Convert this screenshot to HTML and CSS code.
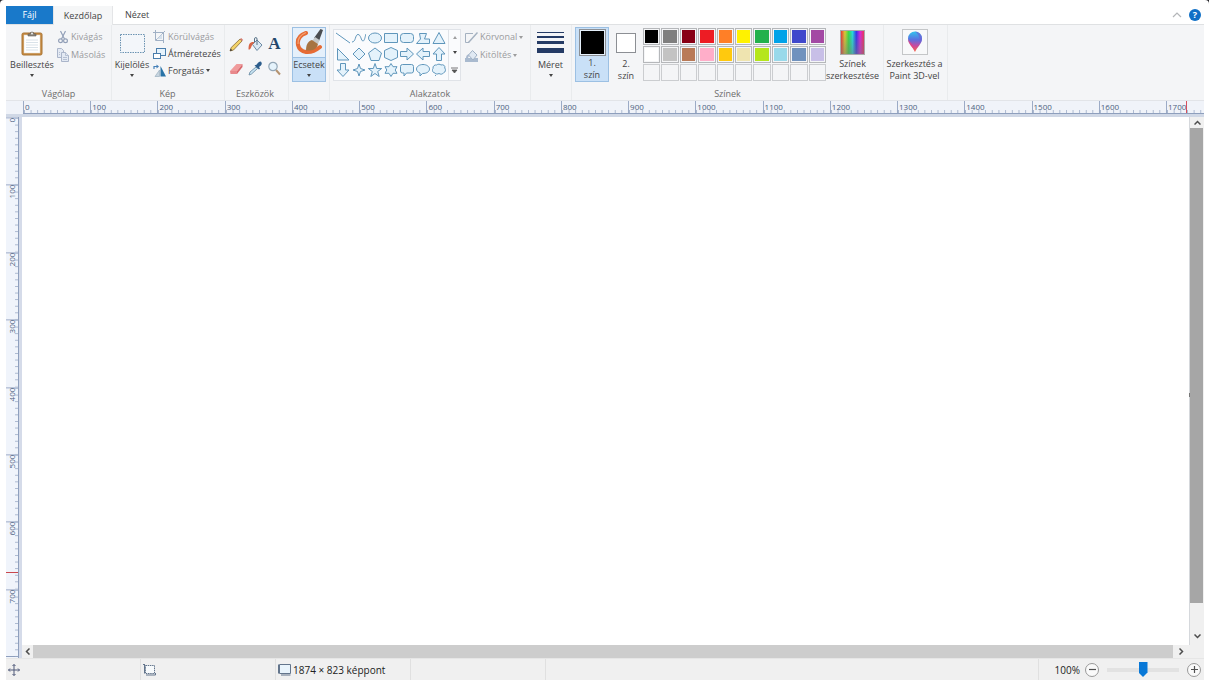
FILE: index.html
```html
<!DOCTYPE html>
<html lang="hu">
<head>
<meta charset="utf-8">
<title>Paint</title>
<link rel="stylesheet" href="styles.css">
</head>
<body>
<div class="window">
  <nav class="tabs">
    <button type="button" class="tab tab-file">Fájl</button>
    <button type="button" class="tab tab-active">Kezdőlap</button>
    <button type="button" class="tab">Nézet</button>
    <span class="spacer"></span>
    <button type="button" class="plain" aria-label="Menüszalag összecsukása"><svg width="10" height="6" viewBox="0 0 10 6" fill="none" stroke="#b4b6b9" stroke-width="1.2"><path d="M1 5L5 1L9 5"/></svg></button>
    <button type="button" class="help" aria-label="Súgó">?</button>
  </nav>

  <main class="ribbon">
    <section class="group g-clipboard">
      <div class="group-body">
        <button type="button" class="big"><span class="pic"><svg width="22" height="26" viewBox="0 0 22 26"><rect x="1" y="3" width="20" height="22" rx="1.5" fill="#c88b42" stroke="#a87435"/><path d="M3 5h16v18H3z" fill="#fff" stroke="#d8d4c8" stroke-width=".5"/><path d="M5 10h12M5 12.500h12M5 15h12M5 17.500h12M5 20h12" stroke="#cfdae3" stroke-width=".8"/><path d="M7 6V4h2a2 2 0 0 1 4 0h2v2z" fill="#8b877e" stroke="#625d54" stroke-width=".6"/><circle cx="11" cy="3.500" r="1" fill="#eee"/></svg></span><span class="txt">Beillesztés</span><i class="arrow"></i></button>
        <div class="stack">
          <button type="button" class="small" disabled><svg width="12" height="14" viewBox="0 0 12 14" fill="none" stroke="#93a0b8" stroke-width="1.2"><path d="M3.500 1l4 8M8.500 1l-4 8"/><circle cx="3.500" cy="10.800" r="1.900"/><circle cx="8.500" cy="10.800" r="1.900"/></svg>Kivágás</button>
          <button type="button" class="small" disabled><svg width="12" height="14" viewBox="0 0 12 14" fill="#e3e9f3" stroke="#aab5ca"><path d="M.5.500h4l2 2v7h-6z"/><path d="M4.500 4.500h4l3 3v6h-7z"/><path d="M8.500 4.500v3h3M6 9.500h4M6 11.500h4M2 4.500h1M2 6.500h1" stroke-width=".8"/></svg>Másolás</button>
        </div>
      </div>
      <h2>Vágólap</h2>
    </section>

    <section class="group g-image">
      <div class="group-body">
        <button type="button" class="big"><span class="pic"><svg width="25" height="19" viewBox="0 0 25 19"><rect x=".5" y=".5" width="24" height="18" fill="#f3f6fa" stroke="#6b93b2" stroke-dasharray="1.500 1"/></svg></span><span class="txt">Kijelölés</span><i class="arrow"></i></button>
        <div class="stack">
          <button type="button" class="small" disabled><svg width="13" height="13" viewBox="0 0 13 13" fill="none" stroke="#a0b0c5"><path d="M2.500 0v10.500H11M0 2.500h10.500V13"/><path d="M3 10l9-9"/><path d="M4 9l5-5v5z" fill="#d5e0ec" stroke="none"/></svg>Körülvágás</button>
          <button type="button" class="small"><svg width="13" height="13" viewBox="0 0 13 13" stroke="#4b7eac"><rect x="3.500" y="1.500" width="9" height="7" fill="#e7f3fc"/><rect x=".5" y="6.500" width="7" height="5" fill="#fff"/></svg>Átméretezés</button>
          <button type="button" class="small"><svg width="13" height="13" viewBox="0 0 13 13"><path d="M7.500 2v10.500H13z" fill="#2873a7"/><path d="M6.500 6v6.500H2z" fill="#c6d4df" stroke="#91a7b9" stroke-width=".6"/><path d="M1 5V2.500h3" fill="none" stroke="#4580b8" stroke-width="1.200"/><path d="M3.500.500L6 2.500 3.500 4.500z" fill="#4580b8"/></svg>Forgatás<i class="arrow"></i></button>
        </div>
      </div>
      <h2>Kép</h2>
    </section>

    <section class="group g-tools">
      <div class="group-body">
        <div class="tools">
          <button type="button" aria-label="Ceruza"><svg width="15" height="15" viewBox="0 0 15 15"><path d="M1 14l1.200-3.500L11 2l2 2L4.500 13z" fill="#f2d268" stroke="#876b39" stroke-width=".8"/><path d="M11 2l1.200-1 2 2L13 4z" fill="#d77c72"/><path d="M1 14l.7-2.300 1.700 1.600z" fill="#333"/></svg></button>
          <button type="button" aria-label="Kitöltés színnel"><svg width="15" height="15" viewBox="0 0 15 15"><path d="M4.500 7.500L9 3l5 5-5 5.500z" fill="#dce9f4" stroke="#6c8aa5"/><path d="M9 8V2q0-1.500-1.200-1.500T6.500 2v3" fill="none" stroke="#557187"/><path d="M6.500 5C2 4.500.5 6.500.5 12.500c2.500.5 2.500-3 4-5z" fill="#d76547"/></svg></button>
          <button type="button" class="letter" aria-label="Szöveg">A</button>
          <button type="button" aria-label="Radír"><svg width="15" height="15" viewBox="0 0 15 15"><path d="M1 10l6.500-7h6L8 10z" fill="#f09b9c"/><path d="M1 10h7v3H1.500z" fill="#e8888b"/><path d="M8 10l5.500-7v3L8 13z" fill="#d8696d"/></svg></button>
          <button type="button" aria-label="Színválasztó"><svg width="15" height="15" viewBox="0 0 15 15"><path d="M1 14l1-3 6-5 1.500 1.500-6 5.500z" fill="#c8e4f3" stroke="#6387a0" stroke-width=".8"/><path d="M6.500 4.500l4.500 4 1-1-1-1.500c3-2 3-3 2.500-4.500S11 0 8.800 3.500z" fill="#2d5d8c"/></svg></button>
          <button type="button" aria-label="Nagyító"><svg width="15" height="15" viewBox="0 0 15 15"><path d="M9 9l4 4.500" stroke="#b59370" stroke-width="2"/><circle cx="6" cy="5.500" r="4.200" fill="#e5f3fc" stroke="#94a7b7" stroke-width="1.200"/></svg></button>
        </div>
      </div>
      <h2>Eszközök</h2>
    </section>

    <section class="group g-brush">
      <div class="group-body">
        <button type="button" class="big brushes"><span class="pic"><svg width="28" height="27" viewBox="0 0 28 27"><path d="M11 4C5 6 2 10 3 16c2 8 12 10 22 2" fill="none" stroke="#e66b35" stroke-width="4" stroke-linecap="round"/><path d="M11 3.500C5 6 2.500 10 3 15" fill="none" stroke="#f3a274" stroke-width="1.200"/><path d="M19 9l6.500-9L28 1l-4 11z" fill="#4b4d50"/><path d="M17.500 11.500L20 8l4.500 3-1.500 4z" fill="#c4c7c8"/><path d="M11 21.500c0-6 2-9.500 6-10.500l6 4c-1 5-5 7-12 6.500z" fill="#a77442"/></svg></span><span class="txt">Ecsetek</span><i class="arrow"></i></button>
      </div>
    </section>

    <section class="group g-shapes">
      <div class="group-body">
        <div class="gallery">
          <div class="shapes">
            <button type="button" aria-label="Vonal"><svg viewBox="0 0 14 14"><path d="M0 2l14 10"/></svg></button>
            <button type="button" aria-label="Görbe"><svg viewBox="0 0 14 14"><path class="open" d="M0 11C4 11 3 3.500 6 3.500S9 10 11 10c1.500 0 2-4 3-7"/></svg></button>
            <button type="button" aria-label="Ellipszis"><svg viewBox="0 0 14 14"><ellipse cx="7" cy="7" rx="6.500" ry="5"/></svg></button>
            <button type="button" aria-label="Téglalap"><svg viewBox="0 0 14 14"><path d="M.5 2.500h13v9H.5z"/></svg></button>
            <button type="button" aria-label="Lekerekített téglalap"><svg viewBox="0 0 14 14"><rect x=".5" y="2.500" width="13" height="9" rx="3"/></svg></button>
            <button type="button" aria-label="Sokszög"><svg viewBox="0 0 14 14"><path d="M3.500 2.500h7L8.500 8h5v4.500H.5l4-4.500z"/></svg></button>
            <button type="button" aria-label="Háromszög"><svg viewBox="0 0 14 14"><path d="M7 1.500l6 11H1z"/></svg></button>
            <button type="button" aria-label="Derékszögű háromszög"><svg viewBox="0 0 14 14"><path d="M1.500 1.500v11.500H13z"/></svg></button>
            <button type="button" aria-label="Rombusz"><svg viewBox="0 0 14 14"><path d="M7 1l6 6-6 6-6-6z"/></svg></button>
            <button type="button" aria-label="Ötszög"><svg viewBox="0 0 14 14"><path d="M7 1l6.500 5-2.500 7.500H3L.5 6z"/></svg></button>
            <button type="button" aria-label="Hatszög"><svg viewBox="0 0 14 14"><path d="M7 .500l6.500 3v7l-6.500 3-6.500-3v-7z"/></svg></button>
            <button type="button" aria-label="Nyíl jobbra"><svg viewBox="0 0 14 14"><path d="M.5 4.500h6.500v-3.500L13.500 7 7 13V9.500H.5z"/></svg></button>
            <button type="button" aria-label="Nyíl balra"><svg viewBox="0 0 14 14"><path d="M13.500 4.500H7V1L.5 7 7 13V9.500h6.500z"/></svg></button>
            <button type="button" aria-label="Nyíl felfelé"><svg viewBox="0 0 14 14"><path d="M4.500 13.500V7H1L7 .500 13 7H9.500v6.500z"/></svg></button>
            <button type="button" aria-label="Nyíl lefelé"><svg viewBox="0 0 14 14"><path d="M4.500.500V7H1l6 6.500L13 7H9.500V.500z"/></svg></button>
            <button type="button" aria-label="Négyágú csillag"><svg viewBox="0 0 14 14"><path d="M7 1l1.500 4.500L13 7 8.500 8.500 7 13 5.500 8.500 1 7l4.500-1.500z"/></svg></button>
            <button type="button" aria-label="Ötágú csillag"><svg viewBox="0 0 14 14"><path d="M7 .500l1.700 5h5L9.700 8.500l1.500 5L7 10.500l-4.200 3 1.500-5L.3 5.500h5z"/></svg></button>
            <button type="button" aria-label="Hatágú csillag"><svg viewBox="0 0 14 14"><path d="M7 .500l2 3.200h4L11.200 7 13 10.300H9l-2 3.200-2-3.200H1L2.800 7 1 3.700h4z"/></svg></button>
            <button type="button" aria-label="Lekerekített buborék"><svg viewBox="0 0 14 14"><path d="M2.500 1.500h9q2 0 2 2V8q0 2-2 2H6.500L4 13v-3H2.500q-2 0-2-2V3.500q0-2 2-2z"/></svg></button>
            <button type="button" aria-label="Ovális buborék"><svg viewBox="0 0 14 14"><path d="M4 10C2 9.300.5 8 .5 6c0-2.500 3-4.500 6.500-4.500s6.500 2 6.500 4.500S11 10.500 6.500 10.500L4 13z"/></svg></button>
            <button type="button" aria-label="Felhőbuborék"><svg viewBox="0 0 14 14"><path d="M3 10C0 9.500 0 6.500 1 5.500.500 3 3 1.500 4.500 2 6 .800 8 1 9 2c2-.8 4.500.5 3.800 3 1.200 1.500.7 4.500-1.300 4.800-1 1.700-3 1.700-4.500.7-1.500.8-3 .8-4-.5zM3 12l1 .8"/></svg></button>
          </div>
          <div class="gallery-nav">
            <button type="button" class="faded" aria-label="Fel"><i class="arrow up"></i></button>
            <button type="button" aria-label="Le"><i class="arrow"></i></button>
            <button type="button" aria-label="Továbbiak"><svg width="7" height="7" viewBox="0 0 7 7"><path d="M0 1h7M1 3h5L3.500 6z" fill="#555" stroke="#555" stroke-width=".8"/></svg></button>
          </div>
        </div>
        <div class="stack">
          <button type="button" class="small" disabled><svg width="13" height="13" viewBox="0 0 13 13" fill="none" stroke="#a4b1c0"><path d="M8 2.500H.5v9H4M12 2.500l-1 0"/><path d="M3.500 11.500L12.500 1.500" stroke-width="1.500"/></svg>Körvonal<i class="arrow"></i></button>
          <button type="button" class="small" disabled><svg width="13" height="13" viewBox="0 0 13 13"><path d="M0 9h13v4H0z" fill="#a9bacf"/><path d="M3.500 6l4-4.500L12 6l-4 5z" fill="#e0e9f3" stroke="#9fb0c4"/><path d="M4 5C1 6 1 8 1 11c2 0 2-3 3-4z" fill="#a9b9ce"/></svg>Kitöltés<i class="arrow"></i></button>
        </div>
      </div>
      <h2>Alakzatok</h2>
    </section>

    <section class="group g-size">
      <div class="group-body">
        <button type="button" class="big"><span class="pic"><svg width="27" height="24" viewBox="0 0 27 24" fill="#253b65"><path d="M0 1h27v1H0zM0 5h27v2H0zM0 10h27v3H0zM0 17h27v5H0z"/></svg></span><span class="txt">Méret</span><i class="arrow"></i></button>
      </div>
    </section>

    <section class="group g-colors">
      <div class="group-body">
        <button type="button" class="big color selected"><span class="pic"><span class="swatch black"></span></span><span class="txt">1.<br>szín</span></button>
        <button type="button" class="big color"><span class="pic"><span class="swatch white"></span></span><span class="txt">2.<br>szín</span></button>
        <div class="palette">
          <button type="button" aria-label="Fekete" style="background-color:#000"></button><button type="button" aria-label="Szürke" style="background-color:#7f7f7f"></button><button type="button" aria-label="Sötétvörös" style="background-color:#880015"></button><button type="button" aria-label="Vörös" style="background-color:#ed1c24"></button><button type="button" aria-label="Narancs" style="background-color:#ff7f27"></button><button type="button" aria-label="Sárga" style="background-color:#fff200"></button><button type="button" aria-label="Zöld" style="background-color:#22b14c"></button><button type="button" aria-label="Türkiz" style="background-color:#00a2e8"></button><button type="button" aria-label="Indigó" style="background-color:#3f48cc"></button><button type="button" aria-label="Lila" style="background-color:#a349a4"></button>
          <button type="button" aria-label="Fehér" style="background-color:#fff"></button><button type="button" aria-label="Világosszürke" style="background-color:#c3c3c3"></button><button type="button" aria-label="Barna" style="background-color:#b97a57"></button><button type="button" aria-label="Rózsaszín" style="background-color:#ffaec9"></button><button type="button" aria-label="Arany" style="background-color:#ffc90e"></button><button type="button" aria-label="Halványsárga" style="background-color:#efe4b0"></button><button type="button" aria-label="Lime" style="background-color:#b5e61d"></button><button type="button" aria-label="Világostürkiz" style="background-color:#99d9ea"></button><button type="button" aria-label="Kékesszürke" style="background-color:#7092be"></button><button type="button" aria-label="Levendula" style="background-color:#c8bfe7"></button>
          <button type="button" class="empty" aria-label="Egyéni 1"></button><button type="button" class="empty" aria-label="Egyéni 2"></button><button type="button" class="empty" aria-label="Egyéni 3"></button><button type="button" class="empty" aria-label="Egyéni 4"></button><button type="button" class="empty" aria-label="Egyéni 5"></button><button type="button" class="empty" aria-label="Egyéni 6"></button><button type="button" class="empty" aria-label="Egyéni 7"></button><button type="button" class="empty" aria-label="Egyéni 8"></button><button type="button" class="empty" aria-label="Egyéni 9"></button><button type="button" class="empty" aria-label="Egyéni 10"></button>
        </div>
        <button type="button" class="big edit-colors"><span class="pic"><span class="spectrum"></span></span><span class="txt">Színek<br>szerkesztése</span></button>
      </div>
      <h2>Színek</h2>
    </section>

    <section class="group g-3d">
      <div class="group-body">
        <button type="button" class="big"><span class="pic"><svg width="26" height="26" viewBox="0 0 26 26"><defs><linearGradient id="drop" x1="0" y1="0" x2="0" y2="1"><stop offset="0" stop-color="#30c5ee"/><stop offset=".4" stop-color="#5b6fe0"/><stop offset=".7" stop-color="#c64aa0"/><stop offset="1" stop-color="#fb6c35"/></linearGradient></defs><rect x=".5" y=".5" width="25" height="25" fill="#f8f9fa" stroke="#c4c6c8"/><path d="M13 23C11 18 6 15 6 9.500a7 7 0 0 1 14 0C20 15 15 18 13 23z" fill="url(#drop)"/><path d="M13 23C11 18 6 15 6 10c2 4 6 5 7 13z" fill="#e9427d" opacity=".7"/><path d="M13 2.500a7 7 0 0 1 7 7c0 2-1 4-2 5 0-5-1-9-5-12z" fill="#6e62d5" opacity=".7"/></svg></span><span class="txt">Szerkesztés a<br>Paint 3D-vel</span></button>
      </div>
    </section>
  </main>

  <div class="ruler-row">
    <div class="hruler">
      <span>0</span><span>100</span><span>200</span><span>300</span><span>400</span><span>500</span><span>600</span><span>700</span><span>800</span><span>900</span><span>1000</span><span>1100</span><span>1200</span><span>1300</span><span>1400</span><span>1500</span><span>1600</span><span class="partial">1700</span>
      <i class="cursor-x"></i>
    </div>
  </div>

  <div class="work">
    <div class="vruler">
      <span>0</span><span>100</span><span>200</span><span>300</span><span>400</span><span>500</span><span>600</span><span>700</span>
      <i class="end-line"></i>
      <i class="cursor-y"></i>
    </div>
    <div class="sheet-area">
      <div class="sheet-row">
        <div class="sheet"><i class="handle"></i></div>
        <div class="vscroll">
          <button type="button" class="plain" aria-label="Görgetés fel"><svg width="7" height="5" viewBox="0 0 7 5" fill="none" stroke="#4d4d4d" stroke-width="1.500"><path d="M.5 4.500l3-3 3 3"/></svg></button>
          <div class="track"><div class="thumb"></div></div>
          <button type="button" class="plain" aria-label="Görgetés le"><svg width="7" height="5" viewBox="0 0 7 5" fill="none" stroke="#4d4d4d" stroke-width="1.500"><path d="M.5.500l3 3 3-3"/></svg></button>
        </div>
      </div>
      <div class="hscroll">
        <button type="button" class="plain" aria-label="Görgetés balra"><svg width="5" height="7" viewBox="0 0 5 7" fill="none" stroke="#4d4d4d" stroke-width="1.500"><path d="M4.500.500l-3 3 3 3"/></svg></button>
        <div class="thumb"></div>
        <button type="button" class="plain" aria-label="Görgetés jobbra"><svg width="5" height="7" viewBox="0 0 5 7" fill="none" stroke="#4d4d4d" stroke-width="1.500"><path d="M.5.500l3 3-3 3"/></svg></button>
      </div>
    </div>
  </div>

  <footer class="status">
    <div class="cell"><svg width="12" height="12" viewBox="0 0 12 12" fill="none" stroke="#4f5878"><path d="M6 .500v11M.5 6h11M4.500 2L6 .500 7.500 2M4.500 10L6 11.500 7.500 10M2 4.500L.5 6 2 7.500M10 4.500L11.500 6 10 7.500"/></svg></div>
    <div class="cell"><svg width="13" height="12" viewBox="0 0 13 12" fill="none" stroke="#63758c"><path d="M2.500 1.500h9v8h-9z" fill="#f7fafc" stroke-dasharray="1.500 .7"/><path d="M2 .500H0M1.500.500v9M3 11h9.500V9"/></svg></div>
    <div class="cell"><svg width="13" height="12" viewBox="0 0 13 12" fill="none" stroke="#63758c"><path d="M1.500.500h11v9h-11z" fill="#e9f4fc"/><path d="M.5.500v9M3 11h9.500"/></svg>1874 × 823 képpont</div>
    <div class="cell"></div>
    <div class="cell wide"></div>
    <div class="zoom">
      <label for="zoom">100%</label>
      <button type="button" class="round" aria-label="Kicsinyítés"><svg width="7" height="7" viewBox="0 0 7 7" stroke="#505050" stroke-width="1.200"><path d="M0 3.500h7"/></svg></button>
      <input type="range" id="zoom" min="0" max="100" value="50">
      <button type="button" class="round" aria-label="Nagyítás"><svg width="7" height="7" viewBox="0 0 7 7" stroke="#505050" stroke-width="1.200"><path d="M0 3.500h7M3.500 0v7"/></svg></button>
    </div>
  </footer>
</div>
</body>
</html>
```
FILE: styles.css
```css
* { box-sizing: border-box; }
html { background: #26262b; }
body {
  margin: 0;
  background: #fff;
  border-radius: 4px 4px 0 0;
  font: 9px/12px "Open Sans", "Noto Sans", sans-serif;
  color: #444;
}
.window {
  display: flex;
  flex-direction: column;
  min-height: 100vh;
  padding: 6px 5px 2px 6px;
}
button {
  font: inherit;
  color: inherit;
  padding: 0;
  border: 0;
  background: none;
}
svg { display: block; flex: none; }
.plain { display: grid; place-items: center; }
.spacer { flex: 1; }

/* Tabs */
.tabs { display: flex; align-items: center; height: 18px; }
.tab { height: 18px; padding: 0 12px; }
.tab-file { width: 47px; background: #1979ca; color: #fff; }
.tab-active {
  width: 60px;
  padding: 0;
  height: 19px;
  align-self: flex-start;
  background: #f5f6f7;
  border: 1px solid #e4e5e7;
  border-width: 0 1px;
  z-index: 1;
}
.help {
  width: 12px;
  height: 12px;
  margin: 0 3px 0 7px;
  border-radius: 50%;
  background: #0f6fc6;
  color: #fff;
  font-weight: bold;
}

/* Ribbon */
.ribbon {
  display: flex;
  height: 77px;
  background: #f4f5f7;
  border-top: 1px solid #dfe1e3;
  border-bottom: 1px solid #e2e4e8;
}
.group {
  display: flex;
  flex-direction: column;
  flex: none;
  padding-top: 2px;
  border-right: 1px solid #e9ebed;
}
.group h2 {
  margin: 0;
  padding-right: 3px;
  font: inherit;
  color: #6c6c6c;
  text-align: center;
}
.group-body { display: flex; align-items: flex-start; height: 61px; }
.g-clipboard { width: 106px; padding-left: 3px; }
.g-image { width: 113px; padding-left: 2px; }
.g-tools { width: 64px; }
.g-brush { width: 41px; padding-left: 3px; }
.g-shapes { width: 201px; padding-left: 3px; }
.g-size { width: 41px; }
.g-colors { width: 312px; padding-left: 3px; }
.g-3d { width: 64px; }

.big {
  display: flex;
  flex-direction: column;
  align-items: center;
  width: 39px;
  height: 55px;
  white-space: nowrap;
}
.g-clipboard .big { width: 46px; }
.g-image .big { width: 36px; }
.g-3d .big { width: 61px; }
.pic { display: grid; place-items: center; height: 32px; }
.g-clipboard .pic, .g-size .pic, .edit-colors .pic, .g-3d .pic { padding-bottom: 1px; }
.big .arrow { margin-top: 3px; }
.arrow {
  flex: none;
  border: 2px solid transparent;
  border-top: 3px solid #444;
  border-bottom: 0;
}
.arrow.up { border-top: 0; border-bottom: 3px solid #444; }
.faded { opacity: 0.5; }
.stack { display: flex; flex-direction: column; padding-top: 1px; }
.g-clipboard .stack { padding-left: 2px; }
.g-image .stack { padding-left: 3px; }
.g-shapes .stack { padding-left: 4px; }
.small {
  display: flex;
  align-items: center;
  gap: 2px;
  height: 18px;
  white-space: nowrap;
}
.g-image .small { height: 17px; }
.small:disabled { color: #9a9b9e; }
.small:disabled .arrow { opacity: 0.5; }

.tools {
  display: grid;
  grid-template-columns: repeat(3, 19px);
  grid-auto-rows: 24px;
  padding: 5px 0 0 2px;
}
.tools button { display: grid; place-items: center; }
.tools .letter {
  font: bold 17px/20px "Liberation Serif", serif;
  color: #24476b;
}
.brushes, .selected {
  width: 34px;
  background: #c9e0f7;
  border: 1px solid #9cc0e3;
}
.brushes .pic {
  width: 32px;
  height: 30px;
  margin-bottom: 1px;
  background: #e5f0fb;
  border-bottom: 1px solid #9cc0e3;
}
.selected .pic { height: 31px; }

.gallery {
  display: flex;
  height: 52px;
  margin-top: 2px;
  background: #fafbfd;
  border: 1px solid #e0e3e8;
}
.shapes {
  display: grid;
  grid-template-columns: repeat(7, 16px);
  grid-auto-rows: 16px;
  padding: 0 1px;
}
.shapes button { display: grid; place-items: center; }
.shapes svg {
  width: 14px;
  height: 14px;
  fill: #e4f2fb;
  stroke: #5f96bb;
}
.shapes .open { fill: none; }
.gallery-nav {
  display: grid;
  width: 12px;
  border-left: 1px solid #e0e3e8;
}
.gallery-nav button { display: grid; place-items: center; }

.color { width: 34px; }
.swatch { border: 1px solid #8c8f94; }
.swatch.black {
  width: 27px;
  height: 27px;
  background: #000;
  box-shadow: inset 0 0 0 1px #e5f0fb;
}
.swatch.white { width: 20px; height: 20px; background: #fff; }
.palette {
  display: grid;
  grid-template-columns: repeat(10, 1fr);
  grid-auto-rows: 17px;
  gap: 1px;
  width: 183px;
  padding-top: 1px;
}
.palette button {
  border: 1px solid #b5b7ba;
  box-shadow: inset 0 0 0 1px #f4f5f7;
}
.palette .empty { border-color: #cbcdd0; }
.edit-colors { width: 53px; }
.spectrum {
  width: 25px;
  height: 25px;
  border: 1px solid #aaa;
  background:
    linear-gradient(to bottom, transparent, #7778),
    linear-gradient(to right, #e33, #dc3, #3d4, #2dd, #33e, #d2d, #e35);
}

/* Rulers */
.ruler-row {
  height: 16px;
  padding-left: 17px;
  background: #f0f3f9;
  border-bottom: 3px solid #d0d8e6;
}
.hruler {
  position: relative;
  display: flex;
  height: 13px;
  border-bottom: 1px solid #8e9fbd;
  color: #4c5f80;
  font-size: 8px;
  line-height: 11px;
}
.hruler span {
  flex: 100 1 0;
  min-width: 0;
  padding-left: 1px;
  border-left: 1px solid #9cabc6;
  background: linear-gradient(to right, #a9b7cf 1px, transparent 1px) 0 100% / 10% 3px repeat-x;
}
.hruler .partial { flex-grow: 55; background-size: 18% 3px; }
.cursor-x {
  position: absolute;
  right: 17px;
  top: 0;
  width: 1px;
  height: 12px;
  background: #d8505c;
}
.work { display: flex; flex: 1; }
.vruler {
  position: relative;
  display: flex;
  flex-direction: column;
  width: 13px;
  background: #f0f4fb;
  border-right: 1px solid #8e9fbd;
  color: #4c5f80;
  font-size: 8px;
  line-height: 11px;
}
.vruler span {
  flex: 1 1 0;
  min-height: 0;
  writing-mode: vertical-rl;
  transform: rotate(180deg);
  text-align: right;
  border-bottom: 1px solid #9cabc6;
  background: linear-gradient(to top, #a9b7cf 1px, transparent 1px) 0 100% / 3px 10% repeat-y;
}
.end-line { height: 2px; border-top: 1px solid #8e9fbd; }
.cursor-y {
  position: absolute;
  left: 0;
  bottom: 85px;
  width: 12px;
  height: 1px;
  background: #c9484d;
}

/* Drawing area */
.sheet-area {
  display: flex;
  flex: 1;
  flex-direction: column;
  border-left: 3px solid #d5dbe9;
}
.sheet-row { display: flex; flex: 1; }
.sheet { position: relative; flex: 1; background: #fff; }
.handle {
  position: absolute;
  right: -1px;
  top: 276px;
  width: 1px;
  height: 4px;
  background: #777;
}
.vscroll {
  display: flex;
  flex-direction: column;
  width: 15px;
  background: #f0f0f0;
  border-left: 1px solid #d5d8dc;
}
.vscroll .plain { height: 11px; }
.vscroll .plain:last-child { height: 17px; }
.track { flex: 1; }
.track .thumb {
  height: 95%;
  margin-right: 1px;
  background: #a6a6a6;
}
.hscroll {
  display: flex;
  height: 13px;
  padding-right: 14px;
  background: #f0f0f0;
}
.hscroll .plain { width: 11px; }
.hscroll .plain:last-child { width: 17px; }
.hscroll .thumb { flex: 1; background: #cdcdcd; }

/* Status bar */
.status {
  display: flex;
  height: 22px;
  background: #f0f0f0;
  border-top: 1px solid #e6e6e6;
  font-size: 10px;
  line-height: 12px;
  color: #222;
}
.cell {
  display: flex;
  align-items: center;
  gap: 2px;
  width: 135px;
  padding: 0 2px;
  border-right: 1px solid #e0e0e0;
}
.cell.wide { flex: 1; }
.zoom { display: flex; align-items: center; padding: 0 3px 0 16px; }
.zoom label { margin-right: 5px; }
.round {
  display: grid;
  place-items: center;
  width: 14px;
  height: 14px;
  border: 1px solid #999;
  border-radius: 50%;
  background: #fafafa;
}
input[type="range"] {
  appearance: none;
  width: 72px;
  height: 16px;
  margin: 0 8px;
  background: linear-gradient(#e2e2e2, #e2e2e2) center / 100% 4px no-repeat;
}
input[type="range"]::-webkit-slider-thumb {
  appearance: none;
  width: 9px;
  height: 15px;
  background: #0878d7;
  clip-path: polygon(0 0, 100% 0, 100% 70%, 50% 100%, 0 70%);
}
```
